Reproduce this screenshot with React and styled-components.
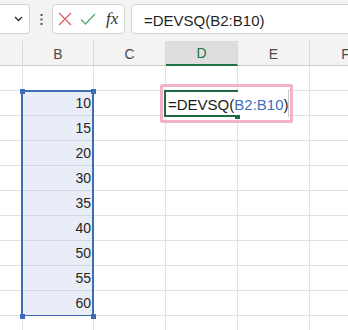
import React from 'react';
import styled, { createGlobalStyle } from 'styled-components';

const GlobalStyle = createGlobalStyle`
  html, body {
    margin: 0;
    padding: 0;
    background: #ffffff;
  }
  body {
    font-family: "Liberation Sans", Arial, sans-serif;
    overflow: hidden;
  }
`;

const columns = [
  { key: 'A', width: 23 },
  { key: 'B', width: 71 },
  { key: 'C', width: 72 },
  { key: 'D', width: 72 },
  { key: 'E', width: 72 },
  { key: 'F', width: 72 },
];

const values = [10, 15, 20, 30, 35, 40, 50, 55, 60];
const ROW_COUNT = 11;

export default function App() {
  return (
    <>
      <GlobalStyle />
      <Sheet>
        <FormulaBar>
          <NameBox>
            <svg width="9" height="6" viewBox="0 0 9 6">
              <path d="M1 1 L4.5 4.5 L8 1" fill="none" stroke="#333" strokeWidth="1.4" />
            </svg>
          </NameBox>
          <Dots>
            <svg width="3" height="11" viewBox="0 0 3 11">
              <rect x="0.5" y="0" width="2" height="2" fill="#555" />
              <rect x="0.5" y="4.5" width="2" height="2" fill="#555" />
              <rect x="0.5" y="9" width="2" height="2" fill="#555" />
            </svg>
          </Dots>
          <FxBox>
            <svg width="14" height="14" viewBox="0 0 14 14">
              <path d="M1 1 L13 13 M13 1 L1 13" stroke="#e06262" strokeWidth="1.4" fill="none" />
            </svg>
            <CheckIcon width="16" height="14" viewBox="0 0 16 14">
              <path d="M1 7.5 L5.5 12 L15 2" stroke="#5aab73" strokeWidth="1.4" fill="none" />
            </CheckIcon>
            <FxLabel>fx</FxLabel>
          </FxBox>
          <FormulaInput>=DEVSQ(B2:B10)</FormulaInput>
        </FormulaBar>

        <Grid>
          {columns.map((col) => (
            <Column key={col.key} $width={col.width}>
              <HeaderCell $active={col.key === 'D'}>{col.key === 'A' ? '' : col.key}</HeaderCell>
              {col.key === 'B' ? (
                <>
                  <Cell />
                  <Range>
                    {values.map((v) => (
                      <Cell key={v} $selected>{v}</Cell>
                    ))}
                    <Handle $top $left />
                    <Handle $top />
                    <Handle $left />
                    <Handle />
                  </Range>
                  <Cell />
                </>
              ) : (
                Array.from({ length: ROW_COUNT }).map((_, i) => (
                  <Cell key={i}>
                    {col.key === 'D' && i === 1 && (
                      <Editor>
                        <ActiveFrame />
                        <FillHandle />
                        <span>=DEVSQ(</span>
                        <RefText>B2:B10</RefText>
                        <span>)</span>
                        <Annotation />
                      </Editor>
                    )}
                  </Cell>
                ))
              )}
            </Column>
          ))}
        </Grid>
      </Sheet>
    </>
  );
}

const Sheet = styled.div`
  width: 348px;
  height: 330px;
  overflow: hidden;
  background: #ffffff;
`;

const FormulaBar = styled.div`
  display: flex;
  align-items: flex-start;
  height: 41px;
  padding-top: 4px;
  box-sizing: border-box;
  background: #f3f3f3;
`;

const Box = styled.div`
  height: 30px;
  box-sizing: border-box;
  background: #ffffff;
  border: 1px solid #d3d3d3;
  border-radius: 4px;
`;

const NameBox = styled(Box)`
  width: 40px;
  margin-left: -10px;
  display: flex;
  align-items: center;
  justify-content: flex-end;
  padding-right: 6px;
`;

const Dots = styled.div`
  width: 22px;
  height: 30px;
  display: flex;
  align-items: center;
  justify-content: center;
`;

const FxBox = styled(Box)`
  width: 73px;
  display: flex;
  align-items: center;
  padding-left: 5px;
`;

const CheckIcon = styled.svg`
  margin-left: 8px;
`;

const FxLabel = styled.span`
  margin-left: 10px;
  font-family: "Liberation Serif", "Times New Roman", serif;
  font-style: italic;
  font-size: 17px;
  color: #333333;
  line-height: 1;
  margin-top: -1px;
`;

const FormulaInput = styled(Box)`
  flex: 1;
  margin-left: 6px;
  margin-right: -10px;
  padding: 4px 0 0 12px;
  font-size: 15px;
  line-height: 24px;
  color: #1f1f1f;
`;

const Grid = styled.div`
  display: flex;
`;

const Column = styled.div`
  display: flex;
  flex-direction: column;
  flex-shrink: 0;
  width: ${(p) => p.$width}px;
`;

const HeaderCell = styled.div`
  height: 25px;
  box-sizing: border-box;
  display: flex;
  align-items: center;
  justify-content: center;
  font-size: 14px;
  line-height: 16px;
  padding-top: 1px;
  color: ${(p) => (p.$active ? '#1e7145' : '#4a4a4a')};
  background: ${(p) => (p.$active ? '#dedede' : '#f3f3f3')};
  border-right: 1px solid #d8d8d8;
  border-bottom: ${(p) => (p.$active ? '2px solid #1e7145' : '1px solid #cdcdcd')};
`;

const Cell = styled.div`
  position: relative;
  height: 25px;
  box-sizing: border-box;
  display: flex;
  align-items: center;
  justify-content: flex-end;
  padding-right: 2px;
  font-size: 14px;
  line-height: 16px;
  color: #262626;
  background: ${(p) => (p.$selected ? '#e8edf8' : '#ffffff')};
  border-right: 1px solid ${(p) => (p.$selected ? '#d3d8e2' : '#e1e1e1')};
  border-bottom: 1px solid ${(p) => (p.$selected ? '#d3d8e2' : '#e1e1e1')};
`;

const Range = styled.div`
  position: relative;
  display: flex;
  flex-direction: column;

  &::after {
    content: '';
    position: absolute;
    top: -1px;
    left: -2px;
    right: 0;
    bottom: -1px;
    border: 2px solid #3d6db5;
    pointer-events: none;
  }
`;

const Handle = styled.span`
  position: absolute;
  z-index: 1;
  width: 5px;
  height: 5px;
  background: #3d6db5;
  ${(p) => (p.$top ? 'top: -2px;' : 'bottom: -3px;')}
  ${(p) => (p.$left ? 'left: -3px;' : 'right: -2px;')}
`;

const Editor = styled.div`
  position: absolute;
  z-index: 3;
  left: -2px;
  top: -1px;
  width: 125px;
  height: 27px;
  box-sizing: border-box;
  padding: 3px 0 0 4px;
  background: #ffffff;
  border-right: 1px solid #c8c8c8;
  font-size: 15px;
  line-height: 24px;
  color: #1a1a1a;
  white-space: nowrap;
  text-align: left;
`;

const ActiveFrame = styled.span`
  position: absolute;
  left: 0;
  top: 0;
  width: 74px;
  height: 27px;
  box-sizing: border-box;
  border: 2px solid #1e6b43;
  border-right: none;
  pointer-events: none;
`;

const FillHandle = styled.span`
  position: absolute;
  left: 71px;
  top: 25px;
  width: 5px;
  height: 4px;
  background: #1e6b43;
`;

const RefText = styled.span`
  color: #3f6fbf;
`;

const Annotation = styled.span`
  position: absolute;
  top: -6px;
  left: -4px;
  right: -5px;
  bottom: -6px;
  border: 3px solid #f2b3ca;
  border-radius: 2px;
  pointer-events: none;
`;
